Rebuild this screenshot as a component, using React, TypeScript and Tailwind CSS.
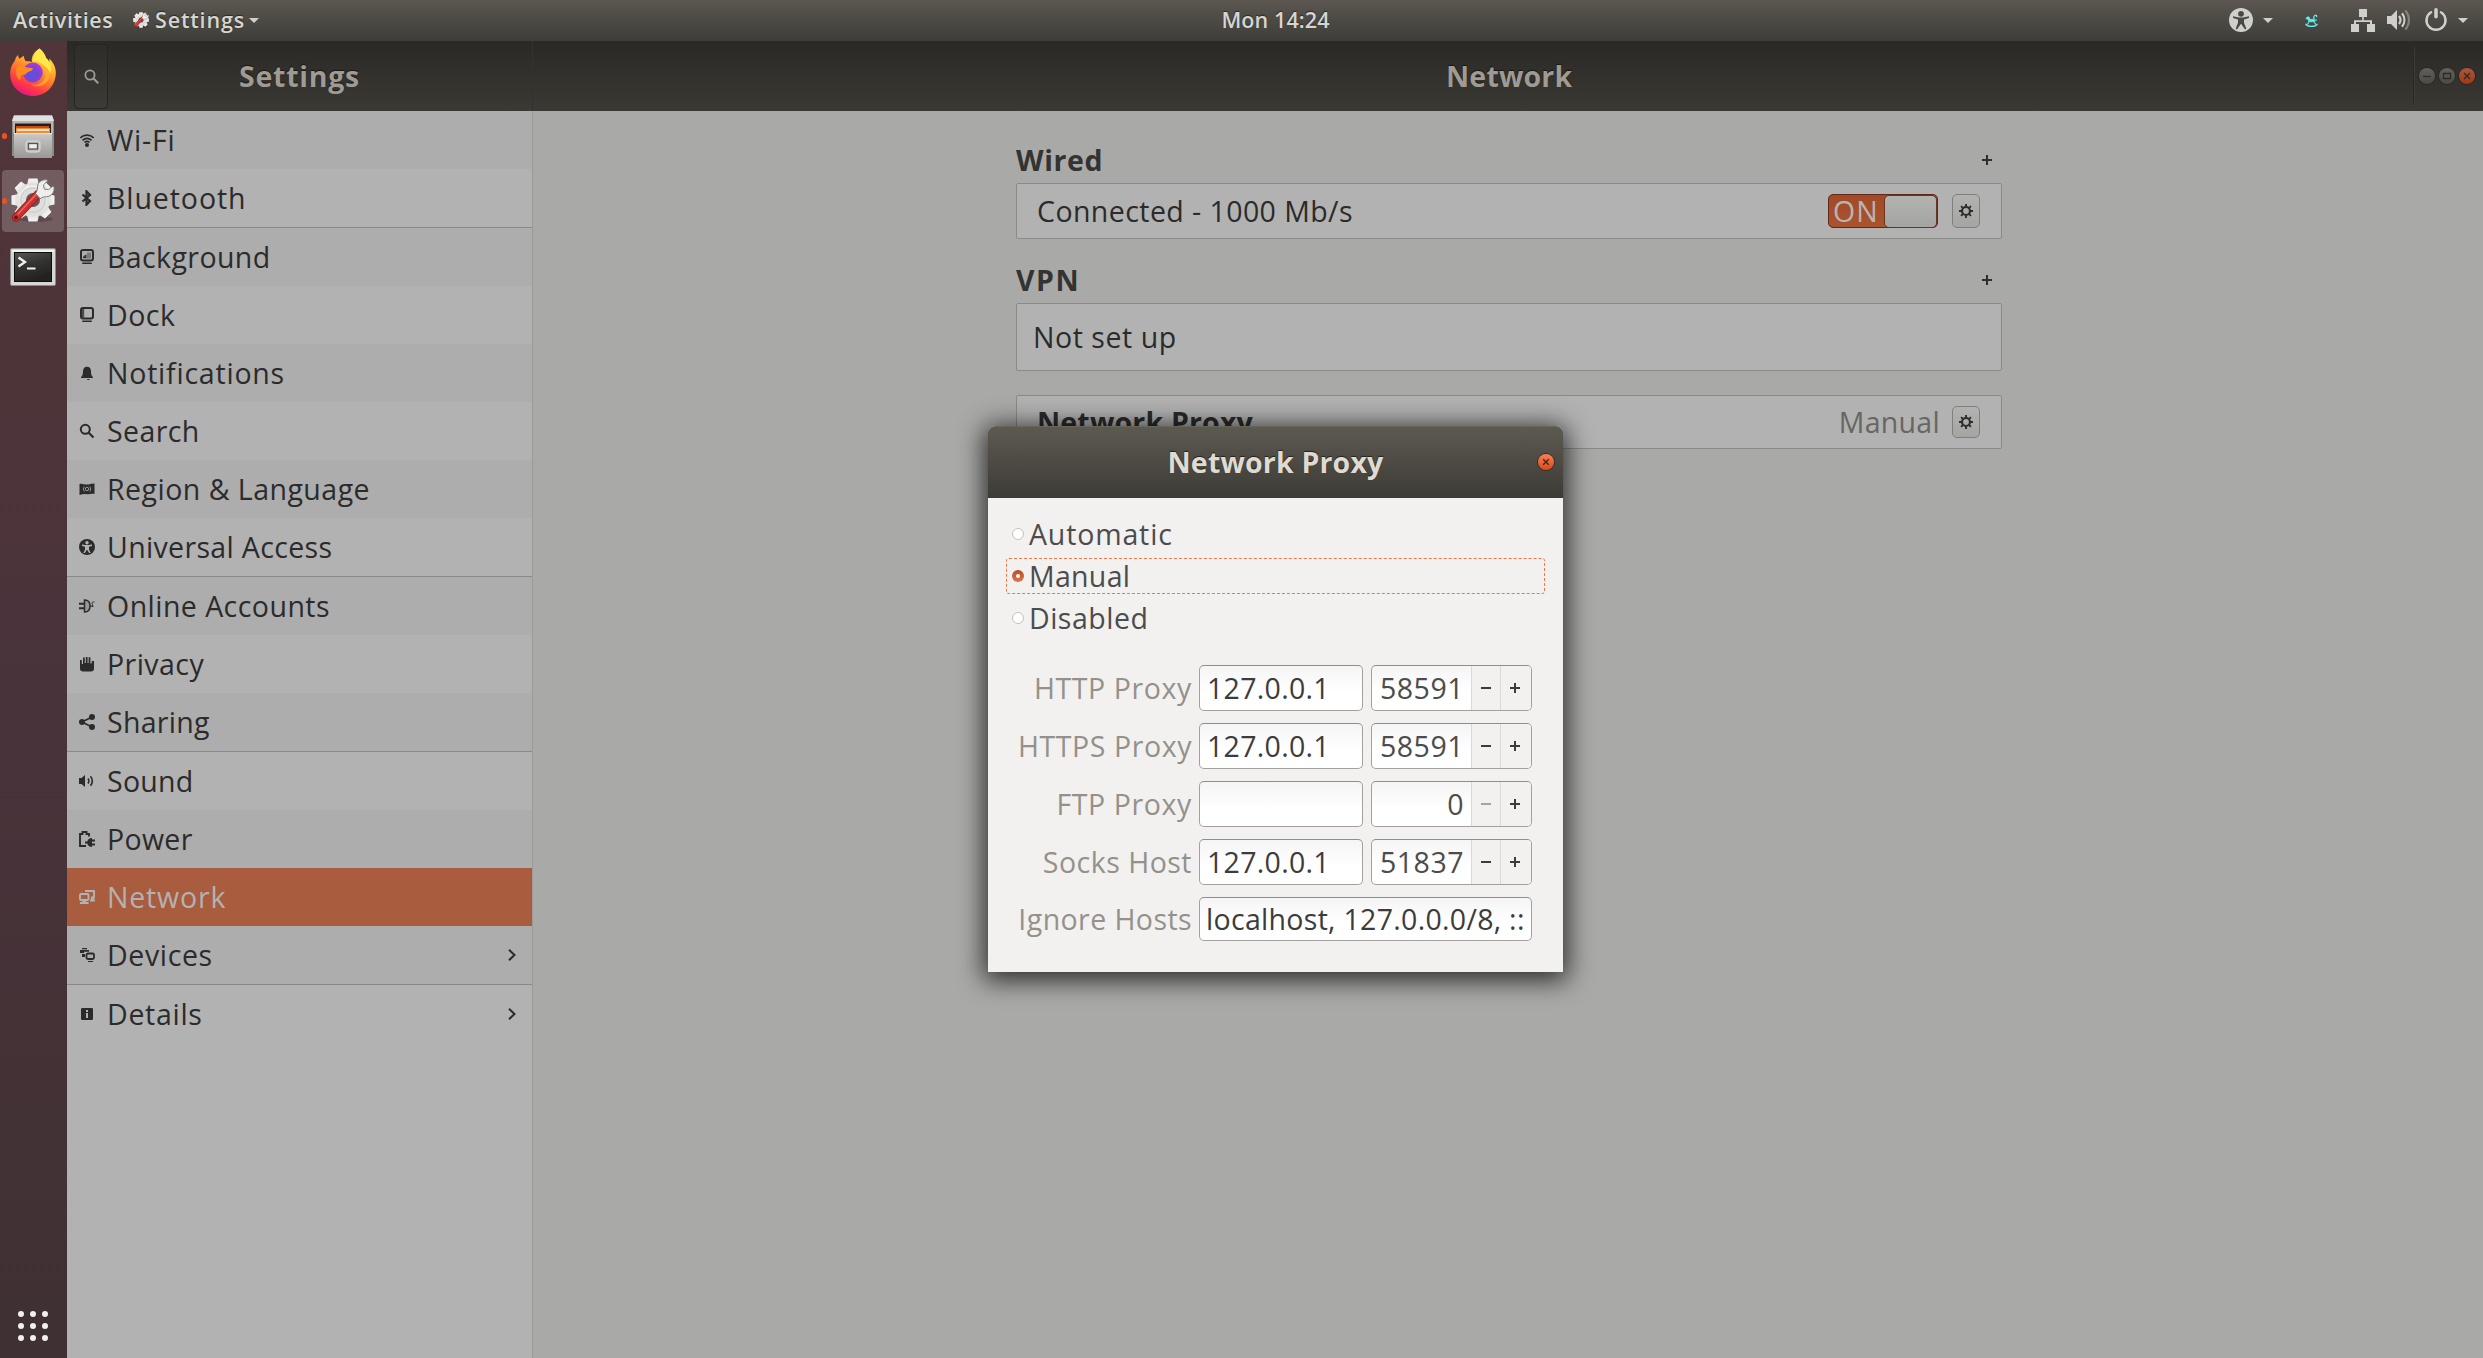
import React from "react";

const LINE = "whitespace-pre leading-none";

/* ---------- top bar ---------- */

function Caret() {
  return (
    <svg width="10" height="5" viewBox="0 0 10 5" className="shrink-0">
      <path d="M0 0h10L5 5z" fill="#cfcfcc" />
    </svg>
  );
}

function SettingsLogo({ size }: { size: number }) {
  return (
    <svg width={size} height={size} viewBox="0 0 44 44" className="shrink-0">
      <defs>
        <linearGradient id="gearFill" x1="0" y1="0" x2="0" y2="1">
          <stop offset="0" stopColor="#f6f6f5" />
          <stop offset="1" stopColor="#dcdcda" />
        </linearGradient>
      </defs>
      <ellipse cx="25" cy="41" rx="17" ry="3" fill="#000" opacity=".18" />
      <g fill="url(#gearFill)">
        <circle cx="22" cy="22" r="17" />
        {[0, 45, 90, 135, 180, 225, 270, 315].map((a) => (
          <path key={a} d="M17.5 0.5h9l1.6 7h-12.2z" transform={`rotate(${a} 22 22)`} />
        ))}
      </g>
      <circle cx="22" cy="22" r="13" fill="#cfcfcd" />
      <circle cx="22" cy="22" r="11.5" fill="#dededc" />
      <circle cx="22" cy="22" r="7" fill="#6b5458" />
      <path d="M5 39.5 27 16" stroke="#8e1a1a" strokeWidth="8" strokeLinecap="round" />
      <path d="M5 39.5 27 16" stroke="#cc2f2f" strokeWidth="6.4" strokeLinecap="round" />
      <path d="M7 36 26 15.5" stroke="#ea6a62" strokeWidth="1.6" strokeLinecap="round" />
      <circle cx="5" cy="39.6" r="1.9" fill="#6e1515" />
      <path
        d="M24.500 15.500c1.500-2 2-4.500 2.200-7.500C27 4 31 1.500 35.500 1.800l1.500.8-4.500 4.200.8 4.300 4.200.5 4.800-3.700.7 1.600c.7 4.500-2.500 9-7.500 9.200-2.700.1-4.500.7-6.300 2z"
        fill="#eeeeec"
        stroke="#77807a"
        strokeWidth="1"
      />
    </svg>
  );
}

function TopBar() {
  return (
    <header className="grid h-[41px] grid-cols-3 bg-linear-to-b from-[#5b5750] to-[#3e3d39] text-[21.5px] font-semibold text-[#d6d5d1] [text-shadow:0_-1px_1px_rgba(0,0,0,0.5)]">
      <div className="flex h-10 items-center pl-[13px]">
        <span className={`${LINE} w-[120px] tracking-[0.62px]`}>Activities</span>
        <SettingsLogo size={16} />
        <span className={`${LINE} ml-[6px] w-[94px] tracking-[0.85px]`}>Settings</span>
        <Caret />
      </div>
      <div className="flex h-10 items-center justify-center pl-[68px]">
        <span className={`${LINE} tracking-[0.1px]`}>Mon 14:24</span>
      </div>
      <div className="flex h-10 items-center justify-end pr-[15px]">
        <svg width="24" height="24" viewBox="0 0 24 24">
          <circle cx="12" cy="12" r="12" fill="#cfcfcc" />
          <circle cx="12" cy="5.800" r="2.900" fill="#4b4943" />
          <path d="M4 8.300 10 9.400h4l6-1.100v1.700l-5 1.500v3.300l2.300 6-1.300.7L12.200 16h-.4L8 21.500l-1.300-.7 2.300-6v-3.300L4 10z" fill="#4b4943" />
        </svg>
        <div className="ml-[10px] mr-[32px] flex"><Caret /></div>
        <svg width="13" height="13" viewBox="0 0 13 13" fill="none" stroke="#63f0f0" strokeWidth="1.200">
          <path d="M.5 9.800c1.500 2.200 4 2.600 6 2.600s4.500-.4 6-2.600" />
          <path d="M2.500 10.500 3.500 8.500M9.500 8.500l1.200 2" />
          <path d="M.8 4.500 2.500 2.800 4.200 3 5 5.300h3.500l1.300.7v2.300l-1.500-.5H4.800l-1.300.8V5.500L2 5.300z" fill="#63f0f0" strokeWidth=".6" />
          <path d="M9.300 5.500c-.8-1.500-.8-3 .5-4s2.500.5 1.500 1.500M9.800 6h2.200" />
        </svg>
        <svg width="24" height="24" viewBox="0 0 24 24" className="ml-[33px]" fill="#cfcfcc">
          <path d="M8 1h8v8h-3.200v3.300H21V16h3v8h-8v-8h3v-2H5v2h3v8H0v-8h3v-3.700h8.200V9H8z" />
        </svg>
        <svg width="24" height="24" viewBox="0 0 24 24" className="ml-[12px]" fill="none">
          <path d="M0 8h4l6-6v20l-6-6H0z" fill="#cfcfcc" />
          <path d="M12 8c1.800 2.400 1.800 5.600 0 8M15 5.300c3.200 4 3.200 9.400 0 13.400" stroke="#cfcfcc" strokeWidth="2.200" />
          <path d="M18.300 2.500c4.800 5.600 4.800 13.400 0 19" stroke="#85837d" strokeWidth="2.200" />
        </svg>
        <svg width="24" height="24" viewBox="0 0 24 24" className="ml-[13px]" fill="none" stroke="#cfcfcc" strokeLinecap="round">
          <path d="M7 4.200a9.500 9.500 0 1 0 10 0" strokeWidth="2.500" />
          <path d="M12 1.800v7" strokeWidth="3.500" />
        </svg>
        <div className="ml-[10px] flex"><Caret /></div>
      </div>
    </header>
  );
}

/* ---------- dock ---------- */

function FirefoxLogo() {
  return (
    <svg width="46" height="48" viewBox="0 0 46 48">
      <defs>
        <linearGradient id="ffBody" x1=".8" y1="0" x2=".3" y2="1">
          <stop offset="0" stopColor="#fff44f" />
          <stop offset=".3" stopColor="#ffbd2e" />
          <stop offset=".55" stopColor="#ff7a2a" />
          <stop offset=".8" stopColor="#ff3647" />
          <stop offset="1" stopColor="#e31587" />
        </linearGradient>
        <radialGradient id="ffGlobe" cx=".45" cy=".6" r=".6">
          <stop offset="0" stopColor="#5b52d8" />
          <stop offset=".6" stopColor="#7a45d6" />
          <stop offset="1" stopColor="#b833e1" />
        </radialGradient>
      </defs>
      <path
        d="M29.500.5c3 2.500 5.500 5.500 6.500 9.500 1.500 1 2.500 2 3 4 .5-1 .5-2 .2-3.500C43.500 14.500 46 19.500 45.800 25.500 45.300 38.500 35.500 48 23 48S.2 38.500.2 26c0-6.500 2-10 4.800-13.500.3-2.300 1.300-4 3-5.500.2 1.700.7 3 1.500 4 1.200-1.500 2.800-2.500 4.500-3 0 2 .5 3.500 1.500 5 2 .2 4.500.2 6.500 1C21 9 24 3.500 29.500.5z"
        fill="url(#ffBody)"
      />
      <path d="M22 13.500C24 6 27 3 29.500.5c3 2.500 5.500 5.500 6.500 9.500 4 3.500 6 9 4.500 15-3-5-7-8.500-11-10.500-2.500-1.300-5-1.500-7.500-1z" fill="#ffe84a" />
      <circle cx="22.800" cy="24.500" r="10" fill="url(#ffGlobe)" />
      <path d="M6.500 20.500C8 17.500 11 16.500 15 19c2.500.8 6 .8 8 1.500-.3 2-2.500 3-5 3.200-1.200 1-1.300 2.200-3 2.800-2 .5-2.500-.3-4.500 1 .5 4-.5 5-2 4-2-3-3-7-2-11z" fill="#ff8c22" />
      <path d="M32 17c4 4 5 11 1 16-3.500 4-8 4.500-12 3.500 6 3.500 14 1.500 17.500-5 2.500-5.500.5-12-6.500-14.500z" fill="#ffb02e" opacity=".8" />
    </svg>
  );
}

function FilesLogo() {
  return (
    <svg width="42" height="44" viewBox="0 0 42 44">
      <defs>
        <linearGradient id="cabinet" x1="0" y1="0" x2="0" y2="1">
          <stop offset="0" stopColor="#c9c9c7" />
          <stop offset="1" stopColor="#989896" />
        </linearGradient>
      </defs>
      <path d="M0 41V5L2 0h38l2 5v36z" fill="#8b8b89" />
      <path d="M0 6 2 .5h38L42 6z" fill="#e0e0de" />
      <path d="M1 6h40v12H1z" fill="#b5b5b3" />
      <path d="M3 8.500h36V18H3z" fill="#20201f" />
      <path d="M4 11h33v7H4z" fill="#c84a18" />
      <path d="M4 13h34v5H4z" fill="#f08a35" />
      <path d="M5 14.200h32v1.600H5z" fill="#fff3e6" />
      <path d="M2 18h38v25H2z" fill="url(#cabinet)" />
      <path d="M2 18h38v1.200H2z" fill="#e4e4e2" />
      <rect x="14" y="26" width="14" height="11" rx="2.500" fill="#bdbdbb" stroke="#dededc" />
      <rect x="16.500" y="28.500" width="9" height="5.500" fill="#efefed" stroke="#555553" strokeWidth="1.300" />
    </svg>
  );
}

function TerminalLogo() {
  return (
    <svg width="46" height="38" viewBox="0 0 46 38">
      <defs>
        <linearGradient id="screen" x1="0" y1="0" x2=".4" y2="1">
          <stop offset="0" stopColor="#555553" />
          <stop offset=".5" stopColor="#333332" />
          <stop offset="1" stopColor="#222221" />
        </linearGradient>
      </defs>
      <rect x=".5" y=".5" width="45" height="37" rx="1.500" fill="#d6d6d4" stroke="#8a8a88" />
      <rect x="2" y="2" width="42" height="2" fill="#f2f2f0" />
      <rect x="4" y="4" width="38" height="30" fill="#0d0d0d" />
      <rect x="5" y="5" width="36" height="28" fill="url(#screen)" />
      <path d="m8.500 9.500 6.500 4.500-6.500 4.500" fill="none" stroke="#f2f2f2" strokeWidth="2.300" />
      <path d="M17 20.500h8.500" stroke="#f2f2f2" strokeWidth="2" />
    </svg>
  );
}

function DockTile({ children, running, active }: { children: React.ReactNode; running?: boolean; active?: boolean }) {
  return (
    <div className="flex h-[62px] w-[67px]">
      <div className={active ? "relative ml-0.5 flex h-[62px] w-[62px] items-center justify-center rounded bg-white/20" : "relative ml-0.5 flex h-[62px] w-[62px] items-center justify-center"}>
        {running && <span className="absolute top-7 left-0 h-[6px] w-[5px] rounded-full bg-[#e95420]" />}
        {children}
      </div>
    </div>
  );
}

function Dock() {
  return (
    <nav className="flex w-[67px] shrink-0 flex-col justify-between bg-linear-to-b from-[#513539] via-[#49333a] to-[#3f3033]">
      <div className="-mt-px flex flex-col gap-[3px]">
        <DockTile><div className="mt-px"><FirefoxLogo /></div></DockTile>
        <DockTile running><div className="mt-0.5"><FilesLogo /></div></DockTile>
        <DockTile running active><div className="-mt-0.5"><SettingsLogo size={44} /></div></DockTile>
        <DockTile><div className="mt-0.5"><TerminalLogo /></div></DockTile>
      </div>
      <div className="mb-[17px] ml-[18px] grid w-[30px] grid-cols-3 gap-[6px]">
        {[0, 1, 2, 3, 4, 5, 6, 7, 8].map((i) => (
          <span key={i} className="h-[6px] w-[6px] rounded-full bg-[#f2f0f0]" />
        ))}
      </div>
    </nav>
  );
}

/* ---------- symbolic icons ---------- */

type IconName =
  | "wifi" | "bluetooth" | "background" | "dock" | "bell" | "search" | "flag" | "access"
  | "accounts" | "hand" | "share" | "sound" | "power" | "network" | "devices" | "info";

const ICONS: Record<IconName, React.ReactNode> = {
  wifi: (
    <g fill="none" stroke="currentColor" strokeWidth="1.600">
      <path d="M1.300 5.800c4-3.600 9.400-3.600 13.400 0M3.500 8.300c2.700-2.400 6.300-2.400 9 0M5.500 10.500c1.500-1.300 3.500-1.300 5 0" />
      <circle cx="8" cy="13" r="2" fill="currentColor" stroke="none" />
    </g>
  ),
  bluetooth: <path d="M3.500 4.500 11 11l-3.500 3.700V1.300L11 5l-7.500 6.500" fill="none" stroke="currentColor" strokeWidth="2.200" />,
  background: (
    <g>
      <rect x="2" y="1" width="12" height="10.500" rx="2" fill="none" stroke="currentColor" strokeWidth="2" />
      <path d="M8 3.500h4v6H4.500V8H7V5.500h1z" fill="currentColor" opacity=".4" />
      <path d="M4 9V7.500h1.500V6H7v3z" fill="currentColor" />
      <path d="M3.500 13.500h9l.5 1.500H3z" fill="currentColor" />
    </g>
  ),
  dock: (
    <g>
      <rect x="2" y="1" width="12" height="10.500" rx="2" fill="none" stroke="currentColor" strokeWidth="2" />
      <path d="M3 2h2.200v8.500H3z" fill="currentColor" opacity=".75" />
      <path d="M3.500 13.500h9l.5 1.500H3z" fill="currentColor" />
    </g>
  ),
  bell: <path d="M8 1.800c2.600 0 4 1.800 4 4.500 0 3 .4 4.500 2 6V13H2v-.7c1.600-1.500 2-3 2-6 0-2.700 1.400-4.500 4-4.500zM8 14h3l-1 1H8.500z" fill="currentColor" />,
  search: (
    <g fill="none" stroke="currentColor" strokeWidth="2">
      <circle cx="6.300" cy="6.300" r="4.500" />
      <path d="m9.500 9.500 5 5" strokeWidth="2.200" />
    </g>
  ),
  flag: (
    <g>
      <path d="M.5 3c2.500-1 5 .8 7.500.6 2.500 0 5-1.500 7.500-1V13c-2.500-.8-5 .4-7.500.2C5.500 12.800 3 13 .5 14z" fill="currentColor" />
      <g fill="none" stroke="#b0b0b0" strokeWidth=".8">
        <circle cx="8" cy="8" r="1.700" />
        <path d="M5.300 5.500c-1.200 1.500-1.200 3.500 0 5M10.700 5.500c1.200 1.500 1.200 3.500 0 5" />
      </g>
    </g>
  ),
  access: (
    <g>
      <circle cx="8" cy="8" r="8" fill="currentColor" />
      <circle cx="8" cy="3.700" r="1.700" fill="#b2b2b2" />
      <path d="M3 5.500 6.500 6h3L13 5.500V7l-3 .8v2.700l1.600 3.500h-1.500L8.300 11h-.6L5.900 14H4.400L6 10.500V7.800L3 7z" fill="#b2b2b2" />
    </g>
  ),
  accounts: (
    <g fill="none" stroke="currentColor">
      <path d="M5.500 2v12c3.500 0 5.500-2.500 5.500-6s-2-6-5.500-6z" strokeWidth="1.500" fill="currentColor" fillOpacity=".15" />
      <path d="M0 5.700h5M0 10.300h5" strokeWidth="2" />
      <path d="M11 8h1.500c2 0 1-1.500.5-2.500S14 3.500 15.500 4M12.500 8.500h2" strokeWidth="1" />
    </g>
  ),
  hand: <path d="M1 4h1.800v4h1.200V1.500h1.800V7h1V1h1.800v6h1V1.200h1.800V7.500h1.300V5H15v7.500c0 1.800-1 3-3 3H4c-2 0-3-1.200-3-3z" fill="currentColor" />,
  share: (
    <g>
      <path d="M13 3 3 8l10 5" fill="none" stroke="currentColor" strokeWidth="1.700" />
      <circle cx="3" cy="8" r="3" fill="currentColor" />
      <circle cx="13" cy="3" r="3" fill="currentColor" />
      <circle cx="13" cy="13" r="3" fill="currentColor" />
    </g>
  ),
  sound: (
    <g>
      <path d="M0 5h2.500L6 2v12l-3.500-3H0z" fill="currentColor" />
      <path d="M9 5.500c1 1.500 1 3.500 0 5M11.500 3.200c2.300 3 2.300 6.600 0 9.600" fill="none" stroke="currentColor" strokeWidth="1.600" />
    </g>
  ),
  power: (
    <g>
      <path d="M7 15H1V3h2.500V1h4v2H10v2.500" fill="none" stroke="currentColor" strokeWidth="1.900" />
      <path d="M6 10.500h2.300c.5-2 2-3.500 4.700-3.500v1.500h3v2h-3v2h3v2h-3V16c-2.700 0-4.200-1.500-4.700-3.500H6z" fill="currentColor" />
    </g>
  ),
  network: (
    <g fill="none" stroke="currentColor" strokeWidth="1.900">
      <rect x="1" y="5" width="8.500" height="6" rx="1" />
      <path d="M1 14h8.500M3.500 12.500h3.500" strokeWidth="2" />
      <path d="M7 3V2h8v6.500h-3M11 11.500h5M12 10h3" />
    </g>
  ),
  devices: (
    <g>
      <path d="M3 1h5v1.200H3zM1 3h9v1.800H5V6H1zM3 7h3v3H3z" fill="currentColor" />
      <rect x="7.500" y="6.500" width="7.500" height="5.500" rx="1.500" fill="none" stroke="currentColor" strokeWidth="1.800" />
      <path d="M9 14h5v1H9z" fill="currentColor" />
    </g>
  ),
  info: (
    <g>
      <rect x="2" y="2" width="12" height="12" rx="1.200" fill="currentColor" />
      <path d="M7 4h2v2H7zM7 7h2v5H7z" fill="#b2b2b2" />
    </g>
  ),
};

function SymbolicIcon({ name }: { name: IconName }) {
  return (
    <svg width="16" height="16" viewBox="0 0 16 16" className="shrink-0">
      {ICONS[name]}
    </svg>
  );
}

/* ---------- sidebar ---------- */

const SECTIONS: { icon: IconName; label: string; track: string; row: string; more?: boolean }[] = [
  { icon: "wifi", label: "Wi-Fi", track: "tracking-[0.78px]", row: "h-[58px] bg-[#adadad]" },
  { icon: "bluetooth", label: "Bluetooth", track: "tracking-[0.92px]", row: "h-[59px] border-b border-[#8b8987]" },
  { icon: "background", label: "Background", track: "tracking-[0.4px]", row: "h-[58px] bg-[#adadad]" },
  { icon: "dock", label: "Dock", track: "tracking-[0.51px]", row: "h-[58px]" },
  { icon: "bell", label: "Notifications", track: "tracking-[0.78px]", row: "h-[58px] bg-[#adadad]" },
  { icon: "search", label: "Search", track: "tracking-[0.4px]", row: "h-[58px]" },
  { icon: "flag", label: "Region & Language", track: "tracking-[0.48px]", row: "h-[58px] bg-[#adadad]" },
  { icon: "access", label: "Universal Access", track: "tracking-[0.35px]", row: "h-[59px] border-b border-[#8b8987]" },
  { icon: "accounts", label: "Online Accounts", track: "tracking-[0.46px]", row: "h-[58px] bg-[#adadad]" },
  { icon: "hand", label: "Privacy", track: "tracking-[0.45px]", row: "h-[58px]" },
  { icon: "share", label: "Sharing", track: "tracking-[0.29px]", row: "h-[59px] border-b border-[#8b8987] bg-[#adadad]" },
  { icon: "sound", label: "Sound", track: "tracking-[0.25px]", row: "h-[58px]" },
  { icon: "power", label: "Power", track: "tracking-[0.33px]", row: "h-[58px] bg-[#adadad]" },
  { icon: "network", label: "Network", track: "tracking-[0.82px]", row: "h-[58px] bg-[#a95c3e] text-[#b2b2b2]" },
  { icon: "devices", label: "Devices", track: "tracking-[0.64px]", row: "h-[59px] border-b border-[#8b8987] bg-[#adadad]", more: true },
  { icon: "info", label: "Details", track: "tracking-[0.71px]", row: "h-[58px]", more: true },
];

function Sidebar() {
  return (
    <aside className="w-[466px] shrink-0 border-r border-[#9a9a98] bg-[#b2b2b2] text-[#2b2b2b]">
      {SECTIONS.map((s) => (
        <div key={s.label} className={`flex items-center pl-3 ${s.row}`}>
          <SymbolicIcon name={s.icon} />
          <span className={`${LINE} ml-3 flex-1 ${s.track}`}>{s.label}</span>
          {s.more && (
            <svg width="8" height="12" viewBox="0 0 8 12" className="mr-4" fill="none" stroke="currentColor" strokeWidth="2">
              <path d="m1 .7 5.500 5.300L1 11.300" />
            </svg>
          )}
        </div>
      ))}
    </aside>
  );
}

/* ---------- main window ---------- */

function HeaderBar() {
  return (
    <div className="flex h-[70px] shrink-0 bg-linear-to-b from-[#2a2925] to-[#3b3934] font-bold text-[#9f9a92] [text-shadow:0_-1px_1px_rgba(0,0,0,0.6)]">
      <div className="flex w-[466px] shrink-0 items-center border-r border-[#33322e] pl-[7px]">
        <div className="flex h-[65px] w-[34px] items-center justify-center rounded border border-[#262521] bg-white/[0.015]">
          <svg width="15" height="15" viewBox="0 0 15 15" fill="none" stroke="currentColor" strokeWidth="1.800">
            <circle cx="6" cy="6" r="4.600" />
            <path d="m9.300 9.300 5 5" strokeWidth="2.200" />
          </svg>
        </div>
        <span className={`${LINE} ml-[131px] tracking-[0.74px]`}>Settings</span>
      </div>
      <div className="flex flex-1 items-center">
        <span className={`${LINE} ml-[913px] flex-1 tracking-[0.19px]`}>Network</span>
        <span className="mr-[5px] h-[58px] w-px bg-[#2a2925] shadow-[1px_0_0_#3d3b37]" />
        <div className="mr-2 flex gap-1">
          <WindowButton tone="bg-linear-to-b from-[#62605a] to-[#4b4a45]" d="M4 8.500h8" />
          <WindowButton tone="bg-linear-to-b from-[#62605a] to-[#4b4a45]" d="M4.500 5.500h7v5h-7z" />
          <WindowButton tone="bg-linear-to-b from-[#a8583c] to-[#a2370f]" d="m5 5 6 6M11 5l-6 6" />
        </div>
      </div>
    </div>
  );
}

function WindowButton({ tone, d }: { tone: string; d: string }) {
  return (
    <span className={`h-4 w-4 rounded-full shadow-[0_0_0_1px_#282723] ${tone}`}>
      <svg width="16" height="16" viewBox="0 0 16 16" fill="none" stroke="#2d2b27" strokeWidth="1.300">
        <path d={d} />
      </svg>
    </span>
  );
}

function Plus() {
  return (
    <svg width="10" height="10" viewBox="0 0 10 10" className="mr-[10px]" stroke="#2e2e2e" strokeWidth="2">
      <path d="M5 0v10M0 5h10" />
    </svg>
  );
}

function GearButton({ height }: { height: string }) {
  return (
    <span className={`mr-[21px] ml-[14px] flex w-7 items-center justify-center rounded-[5px] border border-[#7f7f7c] bg-linear-to-b from-[#b2b2b1] to-[#a5a5a3] ${height}`}>
      <svg width="14" height="14" viewBox="0 0 14 14" stroke="#2e2e2e" fill="none">
        <circle cx="7" cy="7" r="4" strokeWidth="2.200" />
        <g strokeWidth="1.900">
          {[0, 45, 90, 135].map((a) => (
            <path key={a} d="M7 0v2.500M7 11.500V14" transform={`rotate(${a} 7 7)`} />
          ))}
        </g>
      </svg>
    </span>
  );
}

const CARD = "flex items-center rounded-[2px] border border-[#8a8a86] bg-[#b2b2b2] text-[#2b2b2b]";
const SECTION_TITLE = "flex items-center justify-between font-bold text-[#333332]";

function NetworkPanel() {
  return (
    <main className="flex-1 bg-[#a9a9a7] pt-[26px] pl-[483px]">
      <div className="flex w-[986px] flex-col">
        <div className={`${SECTION_TITLE} h-[46px]`}>
          <span className={`${LINE} tracking-[0.62px]`}>Wired</span>
          <Plus />
        </div>
        <div className={`${CARD} h-14`}>
          <span className={`${LINE} ml-[20px] flex-1 tracking-[0.43px]`}>Connected - 1000 Mb/s</span>
          <div className="flex h-[34px] w-[110px] items-center justify-between rounded-[5px] border border-[#5f2a17] bg-linear-to-b from-[#a14a27] to-[#aa532f] text-[#b9b5b3]">
            <span className={`${LINE} ml-1 tracking-[1px]`}>ON</span>
            <span className="h-[33px] w-[53px] rounded-[5px] border border-[#6a3421] bg-linear-to-b from-[#b2b2b1] to-[#a4a4a1]" />
          </div>
          <GearButton height="h-[34px]" />
        </div>
        <div className={`${SECTION_TITLE} mt-[18px] h-[46px]`}>
          <span className={`${LINE} tracking-[1.600px]`}>VPN</span>
          <Plus />
        </div>
        <div className={`${CARD} h-[68px]`}>
          <span className={`${LINE} ml-4 tracking-[0.55px]`}>Not set up</span>
        </div>
        <div className={`${CARD} mt-6 h-[54px]`}>
          <span className={`${LINE} ml-[20px] flex-1 font-bold tracking-[0.18px]`}>Network Proxy</span>
          <span className={`${LINE} -mr-[2px] tracking-[0.3px] text-[#686662]`}>Manual</span>
          <GearButton height="h-8" />
        </div>
      </div>
    </main>
  );
}

/* ---------- proxy dialog ---------- */

function Radio({ label, track, checked }: { label: string; track: string; checked?: boolean }) {
  return (
    <label
      className={
        checked
          ? "-my-px flex h-9 items-center rounded-[3px] border border-dashed border-[#f07746] pl-[5px]"
          : "flex h-[34px] items-center pl-[6px]"
      }
    >
      {checked ? (
        <span className="flex h-3 w-3 items-center justify-center rounded-full bg-linear-to-b from-[#bd4a22] to-[#e0764f]">
          <span className="h-1 w-1 rounded-full bg-white" />
        </span>
      ) : (
        <span className="h-3 w-3 rounded-full border border-[#c4c2bf] bg-white" />
      )}
      <span className={`${LINE} ml-[5px] ${track}`}>{label}</span>
    </label>
  );
}

const FIELD =
  "flex items-center overflow-hidden rounded-[5px] border border-[#a3a19e] border-t-[#8f8e8b] bg-linear-to-b from-[#f5f5f5] to-white to-60% text-[#3c3c3c]";

const PROXIES = [
  { label: "HTTP Proxy", lt: "tracking-[0.6px]", host: "127.0.0.1", port: "58591", pt: "tracking-[0.5px]" },
  { label: "HTTPS Proxy", lt: "tracking-[0.58px]", host: "127.0.0.1", port: "58591", pt: "tracking-[0.5px]" },
  { label: "FTP Proxy", lt: "tracking-[0.6px]", host: "", port: "0", pt: "tracking-[0.5px]" },
  { label: "Socks Host", lt: "tracking-[0.49px]", host: "127.0.0.1", port: "51837", pt: "tracking-[0.5px]" },
];

function ProxyDialog() {
  return (
    <section className="absolute top-[426px] left-[988px] flex h-[546px] w-[575px] flex-col rounded-t-[7px] bg-[#f2f1f0] text-[#4c4c4c] shadow-[0_4px_26px_4px_rgba(0,0,0,0.75)]">
      <div className="grid h-[72px] shrink-0 grid-cols-[1fr_auto_1fr] items-center rounded-t-[7px] border-t border-[#68665a] bg-linear-to-b from-[#5c5a50] to-[#3d3b36] font-bold text-[#dfdbd2] [text-shadow:0_-1px_1px_rgba(0,0,0,0.6)]">
        <span />
        <span className={`${LINE} tracking-[0.18px]`}>Network Proxy</span>
        <span className="mr-[9px] mb-px h-4 w-4 justify-self-end rounded-full bg-linear-to-b from-[#f58057] to-[#dd4814] shadow-[0_0_0_1px_#33312c]">
          <svg width="16" height="16" viewBox="0 0 16 16" fill="none" stroke="#4a2010" strokeWidth="1.300">
            <path d="m5.200 5.200 5.600 5.600M10.800 5.200l-5.600 5.600" />
          </svg>
        </span>
      </div>

      <div className="mt-[19px] mr-[18px] ml-[18px] flex flex-col gap-2">
        <Radio label="Automatic" track="tracking-[0.85px]" />
        <Radio label="Manual" track="tracking-[0.3px]" checked />
        <Radio label="Disabled" track="tracking-[0.5px]" />
      </div>

      <div className="mt-[30px] flex flex-col gap-3">
        {PROXIES.map((p) => (
          <div key={p.label} className="flex h-[46px] items-center">
            <span className={`${LINE} w-[204px] text-right text-[#94918b] ${p.lt}`}>{p.label}</span>
            <div className={`${FIELD} ml-[7px] h-[46px] w-[164px] pl-[7px]`}>
              <span className={`${LINE} tracking-[0.3px]`}>{p.host}</span>
            </div>
            <div className={`${FIELD} ml-2 h-[46px] w-[161px] text-[#4c4c4c]`}>
              <span className={`${LINE} w-[99px] pr-[7px] text-right ${p.pt}`}>{p.port}</span>
              <span className="flex h-full w-[29px] items-center justify-center border-l border-[#dad9d7] bg-[#f2f1f0]">
                <svg width="10" height="10" viewBox="0 0 10 10" stroke={p.port === "0" ? "#a9a6a2" : "#3c3c3c"} strokeWidth="2">
                  <path d="M0 5h10" />
                </svg>
              </span>
              <span className="flex h-full flex-1 items-center justify-center border-l border-[#dad9d7] bg-[#f2f1f0] pr-[2px]">
                <svg width="10" height="10" viewBox="0 0 10 10" stroke="#3c3c3c" strokeWidth="2">
                  <path d="M0 5h10M5 0v10" />
                </svg>
              </span>
            </div>
          </div>
        ))}
        <div className="flex h-[44px] items-center">
          <span className={`${LINE} w-[204px] text-right tracking-[0.42px] text-[#94918b]`}>Ignore Hosts</span>
          <div className={`${FIELD} ml-[7px] h-[44px] w-[333px] pl-[6px]`}>
            <span className={`${LINE} tracking-[0.3px]`}>localhost, 127.0.0.0/8, ::</span>
          </div>
        </div>
      </div>
    </section>
  );
}

export default function App() {
  return (
    <div className="relative flex h-[1358px] w-[2483px] flex-col overflow-hidden bg-[#a9a9a7] font-['Open_Sans',sans-serif] text-[28.5px]">
      <TopBar />
      <div className="flex flex-1">
        <Dock />
        <div className="flex flex-1 flex-col">
          <HeaderBar />
          <div className="flex flex-1">
            <Sidebar />
            <NetworkPanel />
          </div>
        </div>
      </div>
      <ProxyDialog />
    </div>
  );
}
